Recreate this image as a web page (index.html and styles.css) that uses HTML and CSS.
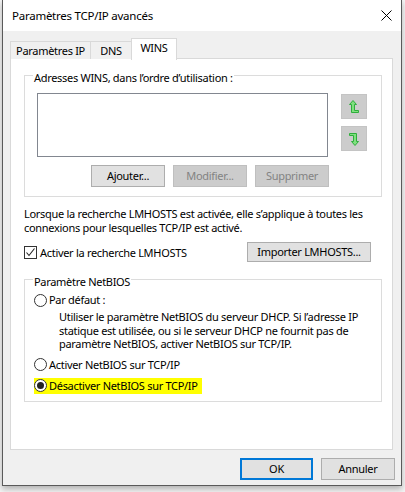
FILE: index.html
```html
<!DOCTYPE html>
<html lang="fr">
<head>
<meta charset="utf-8">
<title>Paramètres TCP/IP avancés</title>
<link rel="stylesheet" href="styles.css">
</head>
<body>
<div class="win">
  <div class="titlebar">
    <span class="title">Paramètres TCP/IP avancés</span>
    <svg class="close" width="11" height="11" viewBox="0 0 11 11"><path d="M0.5 0.5 L10.5 10.5 M10.5 0.5 L0.5 10.5" stroke="#000" stroke-width="1" fill="none"/></svg>
  </div>
  <div class="main">
    <div class="tabs">
      <div class="tab tab-ip">Paramètres IP</div>
      <div class="tab tab-dns">DNS</div>
      <div class="tab tab-wins active">WINS</div>
    </div>
    <div class="panel">
      <div class="group group-wins">
        <div class="group-title">Adresses WINS, dans l’ordre d’utilisation :</div>
        <div class="list-row">
          <div class="listbox"></div>
          <div class="arrows">
            <div class="arrow-btn">
              <svg width="12" height="16" viewBox="0 0 12 16"><polygon points="5,1.5 8.5,5.5 6.5,5.5 6.5,11.5 10.5,11.5 10.5,13.5 3.5,13.5 3.5,5.5 1.5,5.5" fill="#7fe07f" stroke="#2eae3c" stroke-width="1" stroke-linejoin="miter"/></svg>
            </div>
            <div class="arrow-btn arrow-down">
              <svg width="12" height="16" viewBox="0 0 12 16"><polygon points="5,1.5 8.5,5.5 6.5,5.5 6.5,11.5 10.5,11.5 10.5,13.5 3.5,13.5 3.5,5.5 1.5,5.5" fill="#7fe07f" stroke="#2eae3c" stroke-width="1" stroke-linejoin="miter" transform="rotate(180 6 8)"/></svg>
            </div>
          </div>
        </div>
        <div class="btn-row">
          <div class="btn">Ajouter...</div>
          <div class="btn disabled">Modifier...</div>
          <div class="btn disabled">Supprimer</div>
        </div>
      </div>
      <p class="info">Lorsque la recherche LMHOSTS est activée, elle s’applique à toutes les<br>connexions pour lesquelles TCP/IP est activé.</p>
      <div class="check-row">
        <label class="check">
          <span class="checkbox"><svg width="11" height="11" viewBox="0 0 11 11"><polyline points="1.5,5.5 4,8.5 9.5,1.5" fill="none" stroke="#222" stroke-width="1.1"/></svg></span>
          <span>Activer la recherche LMHOSTS</span>
        </label>
        <div class="btn btn-import">Importer LMHOSTS...</div>
      </div>
      <div class="group group-netbios">
        <div class="group-title">Paramètre NetBIOS</div>
        <div class="radio-row first"><span class="radio"></span><span class="rlabel">Par défaut :</span></div>
        <p class="desc">Utiliser le paramètre NetBIOS du serveur DHCP. Si l’adresse IP<br>statique est utilisée, ou si le serveur DHCP ne fournit pas de<br>paramètre NetBIOS, activer NetBIOS sur TCP/IP.</p>
        <div class="radio-row second"><span class="radio"></span><span class="rlabel">Activer NetBIOS sur TCP/IP</span></div>
        <div class="radio-row third"><span class="hl"><span class="radio checked"></span><span class="rlabel">Désactiver NetBIOS sur TCP/IP</span></span></div>
      </div>
    </div>
  </div>
  <div class="footer">
    <div class="btn btn-ok">OK</div>
    <div class="btn btn-cancel">Annuler</div>
  </div>
</div>
</body>
</html>
```
FILE: styles.css
```css
* { box-sizing: border-box; }
html, body { margin: 0; padding: 0; }
body {
  width: 405px;
  height: 492px;
  overflow: hidden;
  background: #f4f4f4;
  font-family: "Noto Sans", "Open Sans", sans-serif;
  font-size: 11px;
  letter-spacing: -0.3px;
  color: #000;
}
.win {
  margin-left: 2px;
  width: 400px;
  height: 486px;
  border: 1px solid #5a5a5a;
  border-top: none;
  background: #f0f0f0;
  display: flex;
  flex-direction: column;
  box-shadow: 0 3px 6px rgba(0,0,0,0.28);
}
.titlebar {
  height: 31px;
  background: #fff;
  display: flex;
  align-items: center;
  justify-content: space-between;
  padding: 0 9px 0 9px;
}
.title { line-height: 16px; font-size: 11.5px; letter-spacing: -0.25px; }
.close { display: block; }
.main { padding: 7px 8px 0 7px; }
.tabs {
  display: flex;
  align-items: flex-end;
  height: 21px;
  position: relative;
  z-index: 1;
  margin-bottom: -1px;
}
.tab {
  height: 18px;
  border: 1px solid #d9d9d9;
  border-bottom: none;
  background: #f0f0f0;
  display: flex;
  align-items: center;
  justify-content: center;
  line-height: 16px;
  margin-left: -1px;
  white-space: nowrap;
  padding-top: 1px;
}
.tab-ip { width: 81px; margin-left: 0; }
.tab-dns { width: 42px; }
.tab-wins { width: 46px; }
.tab.active {
  height: 22px;
  background: #fff;
  padding-top: 0;
  padding-bottom: 3px;
  margin-bottom: -1px;
}
.panel {
  height: 392px;
  border: 1px solid #d9d9d9;
  background: #fff;
  padding: 16px 10px 0 13px;
}
.group {
  border: 1px solid #dcdcdc;
  width: 358px;
}
.group-title {
  margin-top: -6px;
  margin-left: 8px;
  padding: 0 1px;
  background: #fff;
  width: fit-content;
  line-height: 16px;
}
.list-row { display: flex; margin-top: 7px; }
.listbox {
  width: 291px;
  height: 64px;
  margin-left: 12px;
  border: 1px solid #828790;
  background: #fff;
}
.arrows { margin-left: 13px; display: flex; flex-direction: column; gap: 7px; padding-top: 1px; }
.arrow-btn {
  width: 26px;
  height: 25px;
  background: #cccccc;
  border: 1px solid #c4c4c4;
  display: flex;
  align-items: center;
  justify-content: center;
}
.arrow-btn svg { display: block; }
.btn-row {
  display: flex;
  gap: 8px;
  padding-left: 66px;
  margin-top: 8px;
  padding-bottom: 9px;
}
.btn {
  width: 74px;
  height: 22px;
  background: #e1e1e1;
  border: 1px solid #adadad;
  display: flex;
  align-items: center;
  justify-content: center;
  line-height: 16px;
  white-space: nowrap;
}
.btn.disabled {
  background: #cccccc;
  border-color: #bfbfbf;
  color: #838383;
}
.info {
  margin: 10px 0 0 0;
  line-height: 13.5px;
  white-space: nowrap;
}
.check-row {
  display: flex;
  justify-content: space-between;
  align-items: center;
  width: 358px;
  margin-top: 8px;
}
.check { display: flex; align-items: center; gap: 3px; }
.checkbox {
  width: 13px;
  height: 13px;
  border: 1px solid #333;
  background: #fff;
  display: flex;
  align-items: center;
  justify-content: center;
}
.checkbox svg { display: block; }
.btn-import { width: 124px; height: 20px; margin-right: 11px; }
.group-netbios { margin-top: 17px; padding-bottom: 7px; }
.radio-row { display: flex; align-items: center; height: 16px; padding-left: 9px; }
.radio-row.first { margin-top: 2px; }
.radio-row.second { margin-top: 6px; }
.radio-row.third { margin-top: 5px; }
.radio {
  width: 13px;
  height: 13px;
  border: 1px solid #333;
  border-radius: 50%;
  background: #fff;
  flex: none;
  display: flex;
  align-items: center;
  justify-content: center;
}
.radio.checked::after {
  content: "";
  width: 7px;
  height: 7px;
  border-radius: 50%;
  background: #222;
}
.rlabel { margin-left: 2px; line-height: 16px; }
.hl {
  display: flex;
  align-items: center;
  height: 16px;
  background: #ffff00;
  padding-right: 4px;
}
.desc {
  margin: 2px 0 0 0;
  padding-left: 34px;
  line-height: 13.5px;
  white-space: nowrap;
}
.footer {
  display: flex;
  justify-content: flex-end;
  gap: 8px;
  padding: 8px 6px 0 0;
}
.btn-ok { width: 73px; border: 2px solid #0078d7; }
.btn-cancel { width: 74px; }
```
